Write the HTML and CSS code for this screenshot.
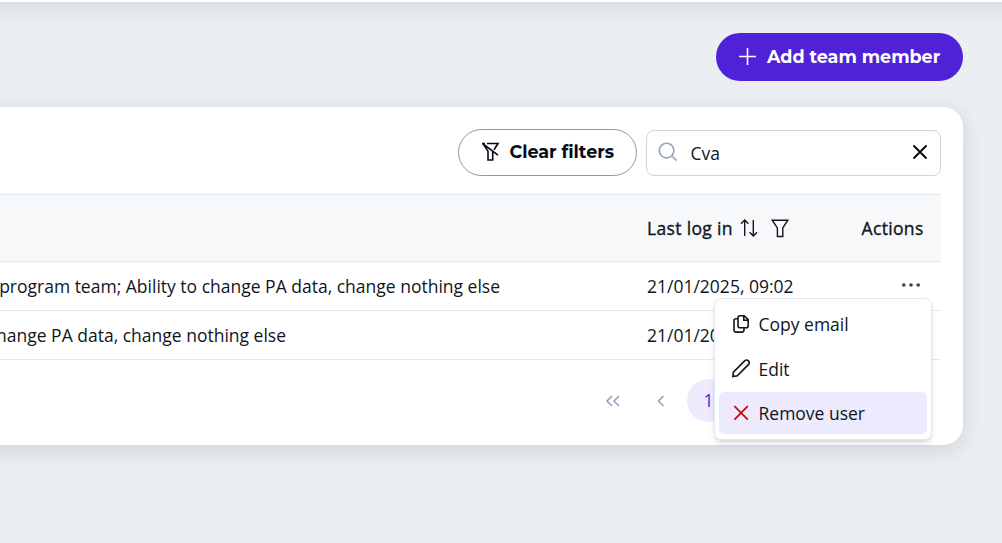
FILE: index.html
```html
<!DOCTYPE html>
<html lang="en">
<head>
<meta charset="utf-8">
<title>Team</title>
<link rel="stylesheet" href="styles.css">
</head>
<body>
<header class="topbar"></header>
<main class="page">
  <div class="page-actions">
    <button class="btn btn-primary">
      <svg class="icon-plus" width="19" height="19" viewBox="0 0 19 19"><path d="M9.5 1v17M1 9.5h17"/></svg>
      <span class="btn-label add-label">Add team member</span>
    </button>
  </div>
  <section class="card">
    <div class="toolbar">
      <button class="btn btn-outline">
        <svg class="icon-clear" width="19" height="20" viewBox="0 0 19 20"><path d="M6 1.5H17L13 7.8M2.2 1.9L7 9.3V18H11.7V9.5M1.5 1.5L17 13.2M1 1.5H4"/></svg>
        <span class="btn-label">Clear filters</span>
      </button>
      <div class="search">
        <svg class="icon-search" width="20" height="20" viewBox="0 0 20 20"><circle cx="8.6" cy="8.6" r="7.3"/><path d="M14 14l4.6 4.6"/></svg>
        <span class="search-value">Cva</span>
        <svg class="icon-x" width="16" height="16" viewBox="0 0 16 16"><path d="M1.5 1.5l13 13M14.5 1.5l-13 13"/></svg>
      </div>
    </div>
    <div class="table">
      <div class="row head">
        <div class="role"></div>
        <div class="login"><span class="login-title">Last log in</span>
          <svg class="icon-line sort" width="18" height="18" viewBox="0 0 18 18"><path d="M4.7 17V1.2M1 4.8l3.7-3.7 3.7 3.7M13.3 1v15.8M9.6 13.2l3.7 3.7 3.7-3.7"/></svg>
          <svg class="icon-line" width="18" height="19" viewBox="0 0 18 19"><path d="M1.2 1.2h15.6l-5 7.7v8.6H6.4V8.9z"/></svg>
        </div>
        <div class="actions">Actions</div>
      </div>
      <div class="row">
        <div class="role"><span class="role-text">program team; Ability to change PA data, change nothing else</span></div>
        <div class="login">21/01/2025, 09:02</div>
        <div class="actions"><svg class="dots" width="20" height="6" viewBox="0 0 20 6"><circle cx="2.8" cy="3" r="1.8"/><circle cx="10" cy="3" r="1.8"/><circle cx="17.2" cy="3" r="1.8"/></svg></div>
      </div>
      <div class="row">
        <div class="role short"><span class="role-text">change PA data, change nothing else</span></div>
        <div class="login">21/01/2025, 09:02</div>
        <div class="actions"></div>
      </div>
    </div>
    <nav class="pager">
      <svg class="chevron" width="16" height="12" viewBox="0 0 16 12"><path d="M7 1L2 6l5 5M14 1L9 6l5 5"/></svg>
      <svg class="chevron prev" width="8" height="12" viewBox="0 0 8 12"><path d="M6.5 1l-5 5 5 5"/></svg>
      <span class="page-number">1</span>
    </nav>
  </section>
</main>
<div class="menu">
  <div class="menu-item">
    <svg class="menu-icon" width="18" height="20" viewBox="0 0 18 20"><path d="M8 1.7h4.2l4 4v6.1q0 2-2 2H8q-2 0-2-2V3.7q0-2 2-2zM11.8 1.9v4.3H16M6 4.7H4q-2 0-2 2v9.4q0 2 2 2h6q2 0 2-2v-2"/></svg>
    <span>Copy email</span>
  </div>
  <div class="menu-item">
    <svg class="menu-icon" width="18" height="20" viewBox="0 0 18 20"><path d="M.9 17.6l.5-4.4L12.9 1.7q1.8-1.4 3.5.1t.2 3.6L5.3 16.8z"/></svg>
    <span>Edit</span>
  </div>
  <div class="menu-item active">
    <svg class="menu-icon danger" width="18" height="20" viewBox="0 0 18 20"><path d="M2.4 3.2l13.4 13.4M15.8 3.2L2.4 16.6"/></svg>
    <span>Remove user</span>
  </div>
</div>
</body>
</html>
```
FILE: styles.css
```css
* { box-sizing: border-box; }
body {
  margin: 0;
  height: 543px;
  overflow: hidden;
  position: relative;
  background: #ebeef3;
  color: #11151c;
  font: 17.5px/24px "Open Sans", "Noto Sans", sans-serif;
}
svg { flex: none; fill: none; stroke: currentColor; stroke-width: 1.6; }
.topbar { height: 2px; margin: 0 -40px; background: #fff; box-shadow: 0 0 22px 5px rgba(40, 55, 65, .16); }
.page { padding: 31px 39px 0 0; }
.page-actions { display: flex; justify-content: flex-end; }
.btn {
  display: flex;
  align-items: center;
  border-radius: 24px;
  font: 700 17.5px/24px "Montserrat", "Inter", sans-serif;
  white-space: nowrap;
}
.btn-primary { width: 247px; height: 48px; padding: 0 0 2px 22px; gap: 10px; border: 0; background: #4f22d7; color: #fff; }
.add-label { padding-top: 2px; }
.btn-outline { width: 179px; height: 47px; padding: 0 0 2px 22px; gap: 9.5px; border: 1px solid #8d98a7; background: #fff; color: #060b18; }
.card {
  margin: 26px 0 0 -40px;
  height: 338px;
  padding: 22px 22px 0 40px;
  border-radius: 0 20px 20px 0;
  background: #fff;
  box-shadow: 0 5px 20px rgba(40, 65, 65, .14);
}
.toolbar { display: flex; justify-content: flex-end; gap: 9px; }
.search {
  display: flex;
  align-items: center;
  width: 295px;
  height: 46px;
  margin-top: 1px;
  padding: 0 12.5px 0 11px;
  border: 1px solid #cbd5e1;
  border-radius: 8px;
}
.icon-search { color: #94a3b8; margin-bottom: 2px; }
.search-value { flex: 1; padding-left: 12.5px; }
.icon-x { stroke-width: 1.8; color: #000; margin-bottom: 3px; }
.table { margin-top: 18px; }
.row {
  display: grid;
  grid-template-columns: 500px 354px 1fr;
  align-items: center;
  height: 49px;
  border-bottom: 1px solid #e2e8f0;
}
.role { display: flex; justify-content: flex-end; overflow: hidden; white-space: nowrap; }
.role.short { padding-right: 214px; }
.login { display: flex; align-items: center; padding-left: 147px; white-space: nowrap; }
.actions { display: flex; padding-left: 47px; }
.head {
  height: 68px;
  background: #f7f8fa;
  border-top: 1px solid #e2e8f0;
  letter-spacing: .34px;
  -webkit-text-stroke: .35px currentColor;
}
.head .actions { padding-left: 7.5px; }
.sort { margin: 0 13px 0 7.5px; }
.icon-line { stroke-width: 1.4; }
.dots { fill: #334155; stroke: none; margin-bottom: 3px; }
.pager { display: flex; align-items: center; height: 43px; margin-top: 19px; padding-left: 605px; color: #94a3b8; }
.prev { margin: 0 22px 0 36px; }
.page-number {
  width: 43px;
  height: 43px;
  border-radius: 50%;
  background: #edeafd;
  color: #4f22d7;
  text-align: center;
  line-height: 43px;
}
.menu {
  position: absolute;
  left: 714px;
  top: 298px;
  width: 218px;
  height: 142px;
  padding: 4px 4px 5px;
  display: flex;
  flex-direction: column;
  justify-content: space-between;
  border: 1px solid #e2e8f0;
  border-radius: 7px;
  background: #fff;
  box-shadow: 0 4px 6px -1px rgba(0, 0, 0, .12), 0 2px 4px -2px rgba(0, 0, 0, .1);
}
.menu-item { display: flex; align-items: center; gap: 8.5px; height: 42px; padding-left: 13px; border-radius: 5px; }
.menu-item.active { background: #edeafd; }
.danger { color: #c70a0a; stroke-width: 1.8; }
```
